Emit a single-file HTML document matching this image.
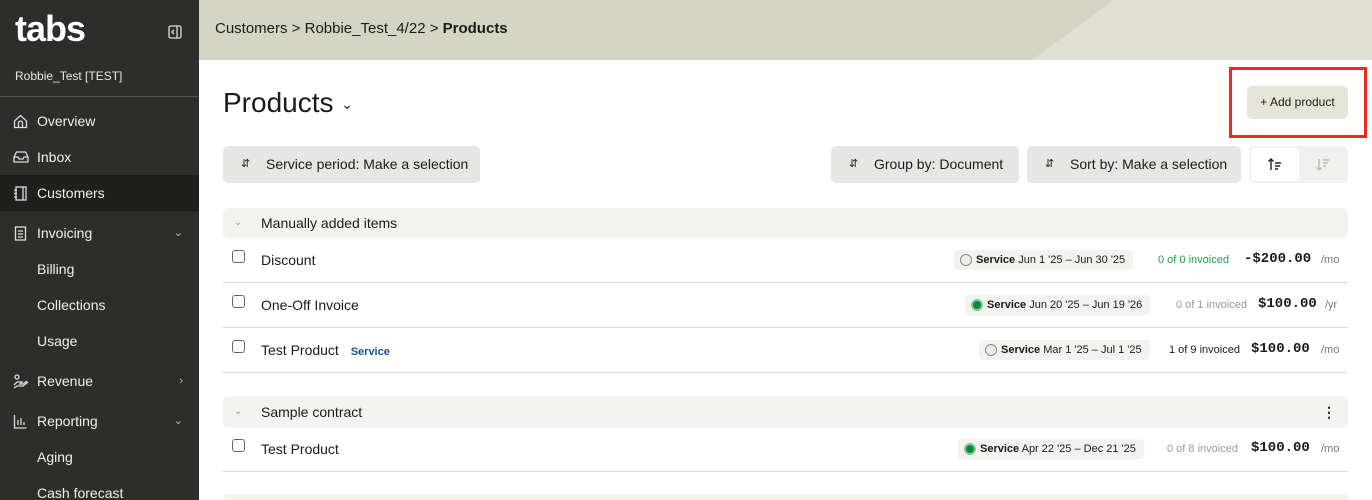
<!DOCTYPE html>
<html style="width:1372px;height:500px;overflow:hidden"><head><meta charset="utf-8"><style>
*{box-sizing:border-box;margin:0;padding:0}
body{width:1372px;height:500px;overflow:hidden;font-family:"Liberation Sans",sans-serif;background:#fff;position:relative;color:#1a1a1a}
.sb{position:absolute;left:0;top:0;width:199px;height:500px;background:#2d2d2b;color:#f0f0ec}
.logo{position:absolute;left:15px;top:8px;font-size:36px;font-weight:bold;letter-spacing:-1px;color:#fff}
.org{position:absolute;left:15px;top:69px;font-size:12px;color:#e8e8e4}
.div{position:absolute;left:0;top:96px;width:199px;height:1px;background:#55554f}
.it{position:absolute;left:0;width:199px;height:36px;font-size:14px;line-height:36px;padding-left:37px}
.it svg{position:absolute;left:13px;top:11px}
.act{background:#1f1f1d}
.chev{position:absolute;right:16px;top:0;font-size:11px;color:#bbb}
.hdr{position:absolute;left:199px;top:0;width:1173px;height:60px;background:#d4d6c3}
.hdr2{position:absolute;left:199px;top:0;width:1173px;height:60px;background:#dfe0d2;clip-path:polygon(833px 60px,915px 0,1173px 0,1173px 60px)}
.bc{position:absolute;left:215px;top:20px;font-size:15px}
h1{position:absolute;left:223px;top:87px;font-size:28px;font-weight:normal}
.btn{position:absolute;height:37px;background:#e6e6e4;border-radius:5px;font-size:14px;line-height:37px}
.btn span.i{position:absolute;left:18px;top:0;font-size:11px}
.grp{position:absolute;left:223px;width:1125px;height:30px;background:#f2f2ee;border-radius:5px;font-size:14px;line-height:30px;padding-left:38px}
.grp .c{position:absolute;left:11px;font-size:10px;color:#999}
.row{position:absolute;left:223px;width:1125px;height:45px;border-bottom:1px solid #d8d8d4;font-size:14px}
.cb{position:absolute;left:9px;width:13px;height:13px;border:1.5px solid #666;border-radius:3px}
.nm{position:absolute;left:38px}
.pill{position:absolute;height:20px;background:#f2f2ee;border-radius:4px;font-size:11px;line-height:20px;padding:0 8px 0 22px}
.pill i{position:absolute;left:6px;top:4px;width:12px;height:12px;border-radius:50%;border:1px solid #888;background:#eee}
.pill i.g{background:#0a8a3a;border:2px solid #7ccf96}
.inv{position:absolute;font-size:11px}
.amt{position:absolute;font-family:"Liberation Mono",monospace;font-weight:bold;font-size:14px}
.per{position:absolute;font-size:11px;color:#777}
</style></head><body>
<div class="sb">
<div class="logo">tabs</div>
<svg style="position:absolute;left:168px;top:25px" width="14" height="14" viewBox="0 0 14 14" fill="none" stroke="#ddd" stroke-width="1.3"><rect x="1" y="1" width="12" height="12" rx="1.5"/><line x1="9" y1="1" x2="9" y2="13"/><path d="M6 5l-2 2 2 2"/></svg>
<div class="org">Robbie_Test [TEST]</div>
<div class="div"></div>
<div class="it" style="top:103px"><svg width="15" height="15" viewBox="0 0 15 15" fill="none" stroke="#ddd" stroke-width="1.3"><path d="M1.5 7L7.5 1.5 13.5 7v6.5h-12z"/><path d="M5.5 13.5V9a2 2 0 014 0v4.5"/></svg>Overview</div>
<div class="it" style="top:139px"><svg width="16" height="14" viewBox="0 0 16 14" fill="none" stroke="#ddd" stroke-width="1.3"><path d="M1 7l2.5-5h9L15 7v5H1z M1 7h4l1 2h4l1-2h4"/></svg>Inbox</div>
<div class="it act" style="top:175px"><svg width="15" height="15" viewBox="0 0 15 15" fill="none" stroke="#ddd" stroke-width="1.3"><rect x="3" y="1" width="10" height="13"/><line x1="10" y1="1" x2="10" y2="14"/><path d="M1 4h3M1 7.5h3M1 11h3"/></svg>Customers</div>
<div class="it" style="top:215px"><svg width="15" height="15" viewBox="0 0 15 15" fill="none" stroke="#ddd" stroke-width="1.3"><rect x="2.5" y="1" width="10" height="13"/><path d="M5 5h5M5 8h5M5 11h5"/></svg>Invoicing<span class="chev">&#8964;</span></div>
<div class="it" style="top:251px">Billing</div>
<div class="it" style="top:287px">Collections</div>
<div class="it" style="top:323px">Usage</div>
<div class="it" style="top:363px"><svg width="16" height="15" viewBox="0 0 16 15" fill="none" stroke="#ddd" stroke-width="1.3"><circle cx="4" cy="3" r="2"/><path d="M1 11l3-3h5l-2 2h3l4-3M1 14l3-2h6l5-4"/></svg>Revenue<span class="chev">&#8250;</span></div>
<div class="it" style="top:403px"><svg width="15" height="15" viewBox="0 0 15 15" fill="none" stroke="#ddd" stroke-width="1.3"><path d="M1.5 1v13h12M5 11V6M8 11V4M11 11V8"/></svg>Reporting<span class="chev">&#8964;</span></div>
<div class="it" style="top:439px">Aging</div>
<div class="it" style="top:475px">Cash forecast</div>
</div>
<div class="hdr"></div><div class="hdr2"></div>
<div class="bc">Customers &gt; Robbie_Test_4/22 &gt; <b>Products</b></div>
<h1>Products <span style="font-size:14px;vertical-align:middle">&#8964;</span></h1>
<div style="position:absolute;left:1229px;top:67px;width:138px;height:71px;border:3px solid #f0281e"></div>
<div class="btn" style="left:1247px;top:86px;width:101px;height:33px;line-height:33px;background:#e5e5da;font-size:12px;text-align:center">+ Add product</div>
<div class="btn" style="left:223px;top:146px;width:257px;padding-left:43px"><span class="i">&#8693;</span>Service period: Make a selection</div>
<div class="btn" style="left:831px;top:146px;width:188px;padding-left:43px"><span class="i">&#8693;</span>Group by: Document</div>
<div class="btn" style="left:1027px;top:146px;width:214px;padding-left:43px"><span class="i">&#8693;</span>Sort by: Make a selection</div>
<div class="btn" style="left:1249px;top:146px;width:99px;background:#f0f0ee">
<div style="position:absolute;left:2px;top:2px;width:48px;height:33px;background:#fff;border-radius:4px"><svg style="position:absolute;left:17px;top:10px" width="14" height="13" viewBox="0 0 14 13" fill="none" stroke="#222" stroke-width="1.4"><path d="M3 12V1M0.5 3.5L3 1l2.5 2.5M7 5h6M7 8h5M7 11h3"/></svg></div>
<svg style="position:absolute;left:67px;top:12px" width="14" height="13" viewBox="0 0 14 13" fill="none" stroke="#bbb" stroke-width="1.4"><path d="M3 1v11M0.5 9.5L3 12l2.5-2.5M7 2h6M7 5h5M7 8h3"/></svg></div>
<div class="grp" style="top:208px"><span class="c">&#8964;</span>Manually added items</div>
<div class="row" style="top:238px"><div class="cb" style="top:12px"></div><div class="nm" style="top:14px">Discount</div>
<div class="pill" style="left:731px;top:12px"><i></i><b>Service</b> Jun 1 '25 – Jun 30 '25</div>
<div class="inv" style="left:935px;top:16px;color:#1aa34a">0 of 0 invoiced</div><div class="amt" style="left:1021px;top:13px">-$200.00</div><div class="per" style="left:1098px;top:16px">/mo</div></div>
<div class="row" style="top:283px"><div class="cb" style="top:12px"></div><div class="nm" style="top:14px">One-Off Invoice</div>
<div class="pill" style="left:742px;top:12px"><i class="g"></i><b>Service</b> Jun 20 '25 – Jun 19 '26</div>
<div class="inv" style="left:953px;top:16px;color:#999">0 of 1 invoiced</div><div class="amt" style="left:1035px;top:13px">$100.00</div><div class="per" style="left:1102px;top:16px">/yr</div></div>
<div class="row" style="top:328px"><div class="cb" style="top:12px"></div><div class="nm" style="top:14px">Test Product <b style="color:#1e4e8c;font-size:11px;margin-left:8px">Service</b></div>
<div class="pill" style="left:756px;top:12px"><i></i><b>Service</b> Mar 1 '25 – Jul 1 '25</div>
<div class="inv" style="left:946px;top:16px">1 of 9 invoiced</div><div class="amt" style="left:1028px;top:13px">$100.00</div><div class="per" style="left:1098px;top:16px">/mo</div></div>
<div class="grp" style="top:397px"><span class="c">&#8964;</span>Sample contract<span style="position:absolute;right:12px;font-weight:bold">&#8942;</span></div>
<div class="row" style="top:427px"><div class="cb" style="top:12px"></div><div class="nm" style="top:14px">Test Product</div>
<div class="pill" style="left:735px;top:12px"><i class="g"></i><b>Service</b> Apr 22 '25 – Dec 21 '25</div>
<div class="inv" style="left:944px;top:16px;color:#999">0 of 8 invoiced</div><div class="amt" style="left:1028px;top:13px">$100.00</div><div class="per" style="left:1098px;top:16px">/mo</div></div>
<div class="grp" style="top:494px;height:6px"></div>
</body></html>
